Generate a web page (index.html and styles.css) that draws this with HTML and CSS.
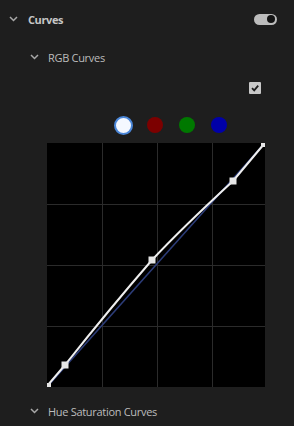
FILE: index.html
```html
<!DOCTYPE html>
<html>
<head>
<meta charset="utf-8">
<link rel="stylesheet" href="styles.css">
</head>
<body>
<div class="panel">
  <div class="row header">
    <svg class="chev" width="9" height="6" viewBox="0 0 9 6"><path d="M1 1 L4.5 4.5 L8 1" fill="none" stroke="#a8a8a8" stroke-width="1.5"/></svg>
    <span class="title">Curves</span>
    <span class="toggle"><span class="knob"></span></span>
  </div>
  <div class="row sub">
    <svg class="chev" width="9" height="6" viewBox="0 0 9 6"><path d="M1 1 L4.5 4.5 L8 1" fill="none" stroke="#a8a8a8" stroke-width="1.5"/></svg>
    <span class="label">RGB Curves</span>
  </div>
  <div class="check-row">
    <span class="checkbox">
      <svg width="12" height="12" viewBox="0 0 12 12"><path d="M3 6.2 L5.2 8.4 L9.2 3.6" fill="none" stroke="#1c1c1c" stroke-width="1.8"/></svg>
    </span>
  </div>
  <div class="dots">
    <span class="cell"><span class="dot white"></span></span>
    <span class="cell"><span class="dot red"></span></span>
    <span class="cell"><span class="dot green"></span></span>
    <span class="cell"><span class="dot blue"></span></span>
  </div>
  <div class="graph">
    <svg width="218" height="244" viewBox="0 0 218 244">
      <rect x="0" y="0" width="218" height="244" fill="#000"/>
      <g stroke="#2b2b2b" stroke-width="1">
        <line x1="55.5" y1="0" x2="55.5" y2="244"/>
        <line x1="110.5" y1="0" x2="110.5" y2="244"/>
        <line x1="165.5" y1="0" x2="165.5" y2="244"/>
        <line x1="0" y1="61.5" x2="218" y2="61.5"/>
        <line x1="0" y1="122.5" x2="218" y2="122.5"/>
        <line x1="0" y1="183.5" x2="218" y2="183.5"/>
      </g>
      <line x1="0" y1="244" x2="217" y2="1" stroke="#2c3c78" stroke-width="1.5"/>
      <path d="M0 243 L18 222 C45 188 72 155 105 117 C135 85 160 62 186 38 L217 1" fill="none" stroke="#efefef" stroke-width="2"/>
      <rect x="14.5" y="218.5" width="7" height="7" fill="#e6e6e6"/>
      <rect x="101.5" y="113.5" width="7" height="7" fill="#e6e6e6"/>
      <rect x="182.5" y="34.5" width="7" height="7" fill="#e6e6e6"/>
      <rect x="0" y="240" width="4" height="4" fill="#e6e6e6"/>
      <rect x="214" y="0" width="4" height="4" fill="#e6e6e6"/>
    </svg>
  </div>
  <div class="row hue">
    <svg class="chev" width="9" height="6" viewBox="0 0 9 6"><path d="M1 1 L4.5 4.5 L8 1" fill="none" stroke="#a8a8a8" stroke-width="1.5"/></svg>
    <span class="label">Hue Saturation Curves</span>
  </div>
</div>
</body>
</html>
```
FILE: styles.css
```css
html, body {
  margin: 0;
  padding: 0;
  background: #1e1e1e;
}
body {
  width: 294px;
  height: 426px;
  overflow: hidden;
  font-family: "Open Sans", "Noto Sans", sans-serif;
}
.panel {
  display: flex;
  flex-direction: column;
}
.row {
  display: flex;
  align-items: center;
}
.chev {
  display: block;
  flex: none;
}
.header {
  height: 38px;
  padding-left: 9px;
  padding-right: 17px;
}
.header .chev {
  margin-right: 10px;
}
.title {
  font-size: 11px;
  font-weight: 700;
  letter-spacing: -0.4px;
  color: #c6c6c6;
  flex: 1;
}
.toggle {
  width: 23px;
  height: 11px;
  border-radius: 6px;
  background: #bdbdbd;
  display: flex;
  align-items: center;
  justify-content: flex-end;
  padding-right: 2px;
  box-sizing: border-box;
}
.knob {
  width: 8px;
  height: 8px;
  border-radius: 50%;
  background: #141414;
}
.sub {
  height: 38px;
  padding-left: 30px;
}
.sub .chev, .hue .chev {
  margin-right: 9px;
}
.label {
  font-size: 11px;
  letter-spacing: -0.3px;
  color: #bcbcbc;
}
.check-row {
  height: 24px;
  display: flex;
  align-items: center;
  justify-content: flex-end;
  padding-right: 33px;
}
.checkbox {
  width: 12px;
  height: 12px;
  background: #c8c8c8;
  border-radius: 1px;
  display: block;
}
.checkbox svg {
  display: block;
}
.dots {
  display: flex;
  padding-left: 107px;
  padding-top: 15px;
  height: 20px;
  margin-bottom: 8px;
}
.cell {
  width: 32px;
  display: flex;
  align-items: center;
  justify-content: center;
}
.dot {
  display: block;
  width: 16px;
  height: 16px;
  border-radius: 50%;
}
.dot.white {
  width: 15px;
  height: 15px;
  background: #f4f8ff;
  border: 2.5px solid #4a86d8;
}
.dot.red { background: #7c0000; }
.dot.green { background: #007800; }
.dot.blue { background: #0000a8; }
.graph {
  margin-left: 47px;
  height: 244px;
}
.graph svg {
  display: block;
}
.hue {
  height: 48px;
  padding-left: 30px;
}
```
